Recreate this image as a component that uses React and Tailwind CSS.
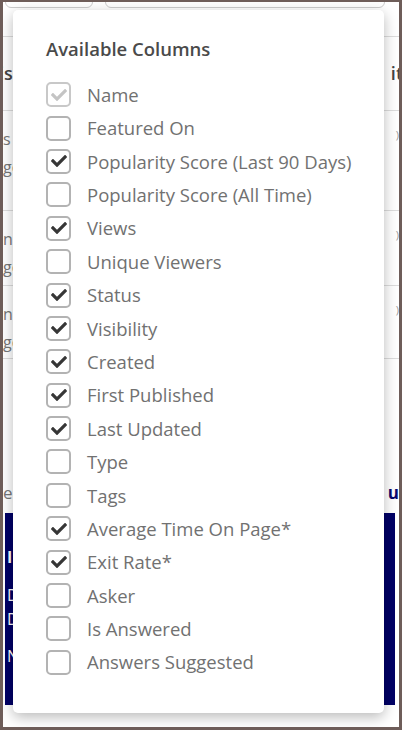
import { FaCheck } from 'react-icons/fa'

const columns = [
  { label: 'Name', checked: true, disabled: true },
  { label: 'Featured On' },
  { label: 'Popularity Score (Last 90 Days)', checked: true },
  { label: 'Popularity Score (All Time)' },
  { label: 'Views', checked: true },
  { label: 'Unique Viewers' },
  { label: 'Status', checked: true },
  { label: 'Visibility', checked: true },
  { label: 'Created', checked: true },
  { label: 'First Published', checked: true },
  { label: 'Last Updated', checked: true },
  { label: 'Type' },
  { label: 'Tags' },
  { label: 'Average Time On Page*', checked: true },
  { label: 'Exit Rate*', checked: true },
  { label: 'Asker' },
  { label: 'Is Answered' },
  { label: 'Answers Suggested' },
]

export default function App() {
  return (
    <div
      className="relative w-[402px] h-[730px] overflow-hidden border-[3px] border-t-2 border-l-[3px] border-[#6e5d59] bg-white"
      style={{ fontFamily: '"Open Sans", "Liberation Sans", sans-serif' }}
    >
      {/* page behind the menu */}
      <div className="flex flex-col h-full">
        <div className="flex gap-3 px-[2px] h-[6px]">
          <div className="w-[88px] h-[12px] -mt-[6px] border border-[#ccc] rounded-md" />
          <div className="flex-1 h-[12px] -mt-[6px] border border-[#ccc] rounded-md mr-[12px]" />
        </div>
        <div className="h-[28px]" />
        <div className="border-t border-[#ddd] h-[74px] flex items-center justify-between text-[18px] font-semibold text-[#444]">
          <span className="-ml-1">is</span>
          <span className="-mr-1">it</span>
        </div>
        {[100, 75, 73].map((h, i) => (
          <div key={i} className="border-t border-[#ddd] flex justify-between text-[16px] text-[#777]" style={{ height: h }}>
            <div className="flex flex-col pt-[14px] leading-[28px]">
              <span>{i === 0 ? 's' : 'n'}</span>
              <span>gc</span>
            </div>
            <span className="pt-[16px] text-[11px] text-[#999]">)</span>
          </div>
        ))}
        <div className="border-t border-[#ddd] h-[155px] flex items-end justify-between pb-[8px] text-[17px]">
          <span className="text-[#777]">e</span>
          <span className="font-bold text-[#0a0a6e]">u</span>
        </div>
        <div className="mx-[2px] mr-[4px] h-[192px] bg-[#000066] flex flex-col pl-[2px] pt-[32px] text-white text-[16px] leading-[24px]">
          <span className="font-bold">I</span>
          <span className="mt-[14px]">D</span>
          <span>D</span>
          <span className="mt-[13px]">N</span>
        </div>
      </div>

      {/* column picker */}
      <div className="absolute left-[10px] top-[8px] w-[371px] h-[703px] bg-white rounded-[5px] shadow-[0_4px_14px_rgba(0,0,0,0.28)] pt-[25px] pl-[33px]">
        <h3 className="text-[18.5px] font-semibold text-[#4a4a4a] leading-[28px]">Available Columns</h3>
        <div className="mt-[15px] flex flex-col">
          {columns.map((c) => (
            <div key={c.label} className="h-[33.4px] flex items-center gap-4">
              <div
                className={`w-[25px] h-[25px] shrink-0 rounded-[5px] border-2 flex items-center justify-center ${
                  c.disabled ? 'border-[#c8c8c8]' : 'border-[#b3b3b3]'
                }`}
              >
                {c.checked && (
                  <FaCheck className={`w-[16px] h-[16px] ${c.disabled ? 'text-[#c4c4c4]' : 'text-[#363636]'}`} />
                )}
              </div>
              <span className="text-[18.5px] text-[#717171] whitespace-nowrap">{c.label}</span>
            </div>
          ))}
        </div>
      </div>
    </div>
  )
}
